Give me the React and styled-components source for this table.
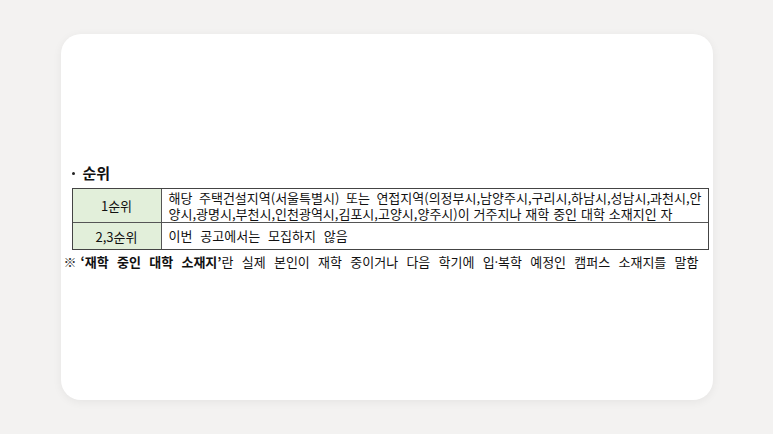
import styled, { createGlobalStyle } from 'styled-components';

const GlobalStyle = createGlobalStyle`
  html, body {
    margin: 0;
    padding: 0;
    background: #f3f2f1;
  }
  body {
    font-family: "Noto Sans CJK KR", "Noto Sans", sans-serif;
    color: #111;
  }
`;

const Page = styled.div`
  height: 434px;
  display: flex;
  align-items: center;
  justify-content: center;
`;

const Card = styled.div`
  width: 652px;
  height: 366px;
  box-sizing: border-box;
  background: #fff;
  border-radius: 20px;
  box-shadow: 0 2px 10px rgba(0, 0, 0, 0.06);
  padding: 129px 4px 0 3px;
`;

const Heading = styled.div`
  display: flex;
  align-items: center;
  gap: 8px;
  padding-left: 8px;
  font-size: 15px;
  font-weight: 700;
  line-height: 20px;
  margin-bottom: 5px;
`;

const Dot = styled.span`
  width: 3px;
  height: 3px;
  border-radius: 50%;
  background: #222;
`;

const Table = styled.div`
  margin-left: 8px;
  border: 1px solid #444;
  display: grid;
  grid-template-columns: 89px 1fr;
`;

const Label = styled.div`
  background: #e2efda;
  border-right: 1px solid #555;
  border-top: ${p => (p.$first ? 'none' : '1px solid #555')};
  display: flex;
  align-items: center;
  justify-content: center;
  font-size: 13px;
  height: ${p => p.$h}px;
`;

const Cell = styled.div`
  border-top: ${p => (p.$first ? 'none' : '1px solid #555')};
  display: flex;
  flex-direction: column;
  justify-content: center;
  padding: 0 6px 0 7px;
  font-size: 13px;
  line-height: 16px;
  height: ${p => p.$h}px;
`;

const Line = styled.div`
  white-space: nowrap;
  text-align: ${p => (p.$justify ? 'justify' : 'left')};
  text-align-last: ${p => (p.$justify ? 'justify' : 'left')};
  word-spacing: ${p => p.$ws || 0}px;
`;

const Note = styled.div`
  margin-top: 3px;
  font-size: 13px;
  line-height: 18px;
  white-space: nowrap;
  text-align: justify;
  text-align-last: justify;
  padding-right: 10px;

  b {
    font-weight: 700;
  }
`;

const Mark = styled.span`
  display: inline-block;
  margin-right: 4px;
  color: #333;
`;

const Dotted = styled.span`
  letter-spacing: -2px;
`;

export default function App() {
  return (
    <>
      <GlobalStyle />
      <Page>
        <Card>
          <Heading>
            <Dot />
            순위
          </Heading>
          <Table>
            <Label $first $h={33}>1순위</Label>
            <Cell $first $h={33}>
              <Line $justify>해당 주택건설지역(서울특별시) 또는 연접지역(의정부시,남양주시,구리시,하남시,성남시,과천시,안</Line>
              <Line $ws={1}>양시,광명시,부천시,인천광역시,김포시,고양시,양주시)이 거주지나 재학 중인 대학 소재지인 자</Line>
            </Cell>
            <Label $h={26}>2,3순위</Label>
            <Cell $h={26}>
              <Line $ws={5}>이번 공고에서는 모집하지 않음</Line>
            </Cell>
          </Table>
          <Note>
            <Mark>※</Mark><b>‘재학 중인 대학 소재지’</b>란 실제 본인이 재학 중이거나 다음 학기에 <Dotted>입·</Dotted>복학 예정인 캠퍼스 소재지를 말함
          </Note>
        </Card>
      </Page>
    </>
  );
}
